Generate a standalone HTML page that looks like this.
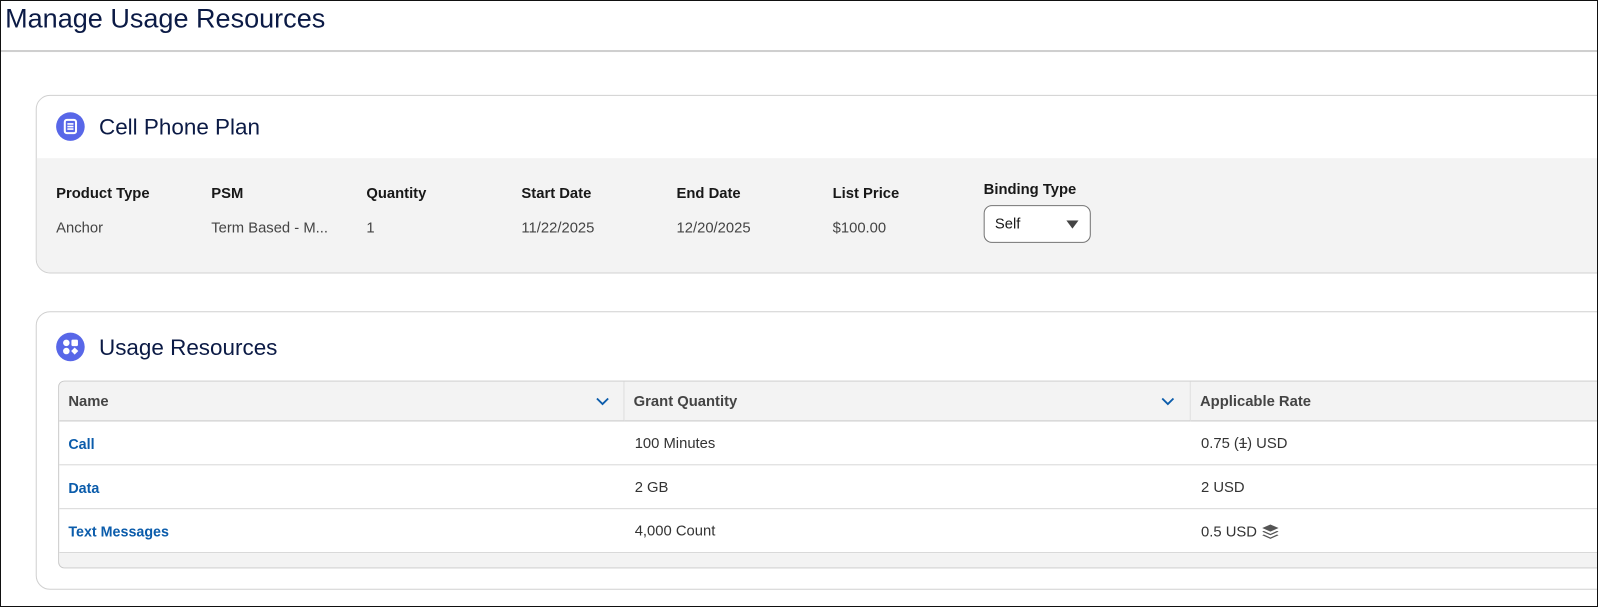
<!DOCTYPE html>
<html><head><meta charset="utf-8"><style>
*{box-sizing:border-box;margin:0;padding:0}
body{width:1600px;height:608px;overflow:hidden;background:#fff;font-family:"Liberation Sans",Arial,sans-serif;position:relative}
.frame{position:absolute;left:0;top:0;width:1598px;height:607px;border:1.5px solid #111;overflow:hidden}
.inner{position:absolute;left:-1px;top:-1px;width:1570px;height:600px;transform:scale(1.0204);transform-origin:0 0}
.title{position:absolute;left:5px;top:3px;font-size:26.5px;color:#0b1a45}
.hr{position:absolute;left:0;top:49px;width:100%;height:2px;background:#cfcfcf}
.card{position:absolute;left:35px;width:1600px;border:1px solid #d0d0d0;border-radius:14px;background:#fff;overflow:hidden}
.icon{position:absolute;width:28px;height:28px;border-radius:50%;background:#5867e8}
.ct{position:absolute;font-size:22px;color:#0b1a45}
.body1{position:absolute;left:0;top:61px;width:100%;height:112px;background:#f3f3f3}
.lbl{position:absolute;top:27px;font-size:14.5px;font-weight:bold;color:#181818}
.val{position:absolute;top:61px;font-size:14.5px;color:#444}
.dd{position:absolute;left:928px;top:46px;width:105px;height:37px;border:1px solid #747474;border-radius:8px;background:#fff;font-size:14.5px;color:#181818;padding:10px 0 0 10px}
.tbl{position:absolute;left:21px;top:67px;width:1600px;height:184px;border:1.5px solid #c9c9c9;border-radius:6px;overflow:hidden;background:#fff}
.th{position:absolute;top:0;height:39px;background:#f3f3f3;border-bottom:1px solid #c9c9c9;font-size:14.5px;font-weight:bold;color:#444;padding:12px 0 0 9px}
.row{position:absolute;left:0;width:100%;height:43px;border-bottom:1px solid #d8d8d8;font-size:14.5px;color:#333}
.row span{position:absolute;top:14px}
a{color:#0b5cab;text-decoration:none;font-weight:bold;font-size:14px}
.foot{position:absolute;left:0;top:168px;width:100%;height:16px;background:#f3f3f3}
</style></head><body><div class="frame"><div class="inner">
<div class="title">Manage Usage Resources</div>
<div class="hr"></div>

<div class="card" style="top:93px;height:175px">
 <div class="icon" style="left:19px;top:16px"><svg width="28" height="28" viewBox="0 0 28 28"><rect x="8.5" y="7.5" width="11" height="13" rx="2" fill="none" stroke="#fff" stroke-width="2"/><path d="M11 11.5h6M11 14h6M11 16.5h6" stroke="#fff" stroke-width="1.6"/></svg></div>
 <div class="ct" style="left:61px;top:18px">Cell Phone Plan</div>
 <div class="body1">
  <div class="lbl" style="left:19px">Product Type</div><div class="val" style="left:19px">Anchor</div>
  <div class="lbl" style="left:171px">PSM</div><div class="val" style="left:171px">Term Based - M...</div>
  <div class="lbl" style="left:323px">Quantity</div><div class="val" style="left:323px">1</div>
  <div class="lbl" style="left:475px">Start Date</div><div class="val" style="left:475px">11/22/2025</div>
  <div class="lbl" style="left:627px">End Date</div><div class="val" style="left:627px">12/20/2025</div>
  <div class="lbl" style="left:780px">List Price</div><div class="val" style="left:780px">$100.00</div>
  <div class="lbl" style="left:928px;top:23px">Binding Type</div>
  <div class="dd">Self<svg style="position:absolute;left:80px;top:14px" width="12" height="8" viewBox="0 0 12 8"><path d="M0 0h12L6 8z" fill="#444"/></svg></div>
 </div>
</div>

<div class="card" style="top:305px;height:273px">
 <div class="icon" style="left:19px;top:20px"><svg width="28" height="28" viewBox="0 0 28 28" fill="#fff"><circle cx="10" cy="10" r="3.2"/><rect x="15" y="6.8" width="6.4" height="6.4" rx="1.2"/><circle cx="10" cy="18" r="3.2"/><path d="M18.2 14.5l3.5 3.5-3.5 3.5-3.5-3.5z"/></svg></div>
 <div class="ct" style="left:61px;top:22px">Usage Resources</div>
 <div class="tbl">
  <div class="th" style="left:0;width:554px;border-right:1px solid #ddd">Name<svg style="position:absolute;left:526px;top:15px" width="13" height="9" viewBox="0 0 13 9"><path d="M1 1.5l5.5 5.5 5.5-5.5" fill="none" stroke="#0b5cab" stroke-width="1.8"/></svg></div>
  <div class="th" style="left:554px;width:555px;border-right:1px solid #ddd">Grant Quantity<svg style="position:absolute;left:526px;top:15px" width="13" height="9" viewBox="0 0 13 9"><path d="M1 1.5l5.5 5.5 5.5-5.5" fill="none" stroke="#0b5cab" stroke-width="1.8"/></svg></div>
  <div class="th" style="left:1109px;width:500px">Applicable Rate</div>
  <div class="row" style="top:39px"><span style="left:9px"><a>Call</a></span><span style="left:564px">100 Minutes</span><span style="left:1119px">0.75 (<s>1</s>) USD</span></div>
  <div class="row" style="top:82px"><span style="left:9px"><a>Data</a></span><span style="left:564px">2 GB</span><span style="left:1119px">2 USD</span></div>
  <div class="row" style="top:125px"><span style="left:9px"><a>Text Messages</a></span><span style="left:564px">4,000 Count</span><span style="left:1119px">0.5 USD <svg style="vertical-align:-3px" width="18" height="16" viewBox="0 0 18 16" fill="#555"><path d="M9 1l8 3.5-8 3.5-8-3.5z"/><path d="M2.5 7.3L9 10.2l6.5-2.9L17 8l-8 3.6L1 8z"/><path d="M2.5 10.8L9 13.7l6.5-2.9 1.5.7-8 3.6-8-3.6z"/></svg></span></div>
  <div class="foot"></div>
 </div>
</div>
</div></div></body></html>
